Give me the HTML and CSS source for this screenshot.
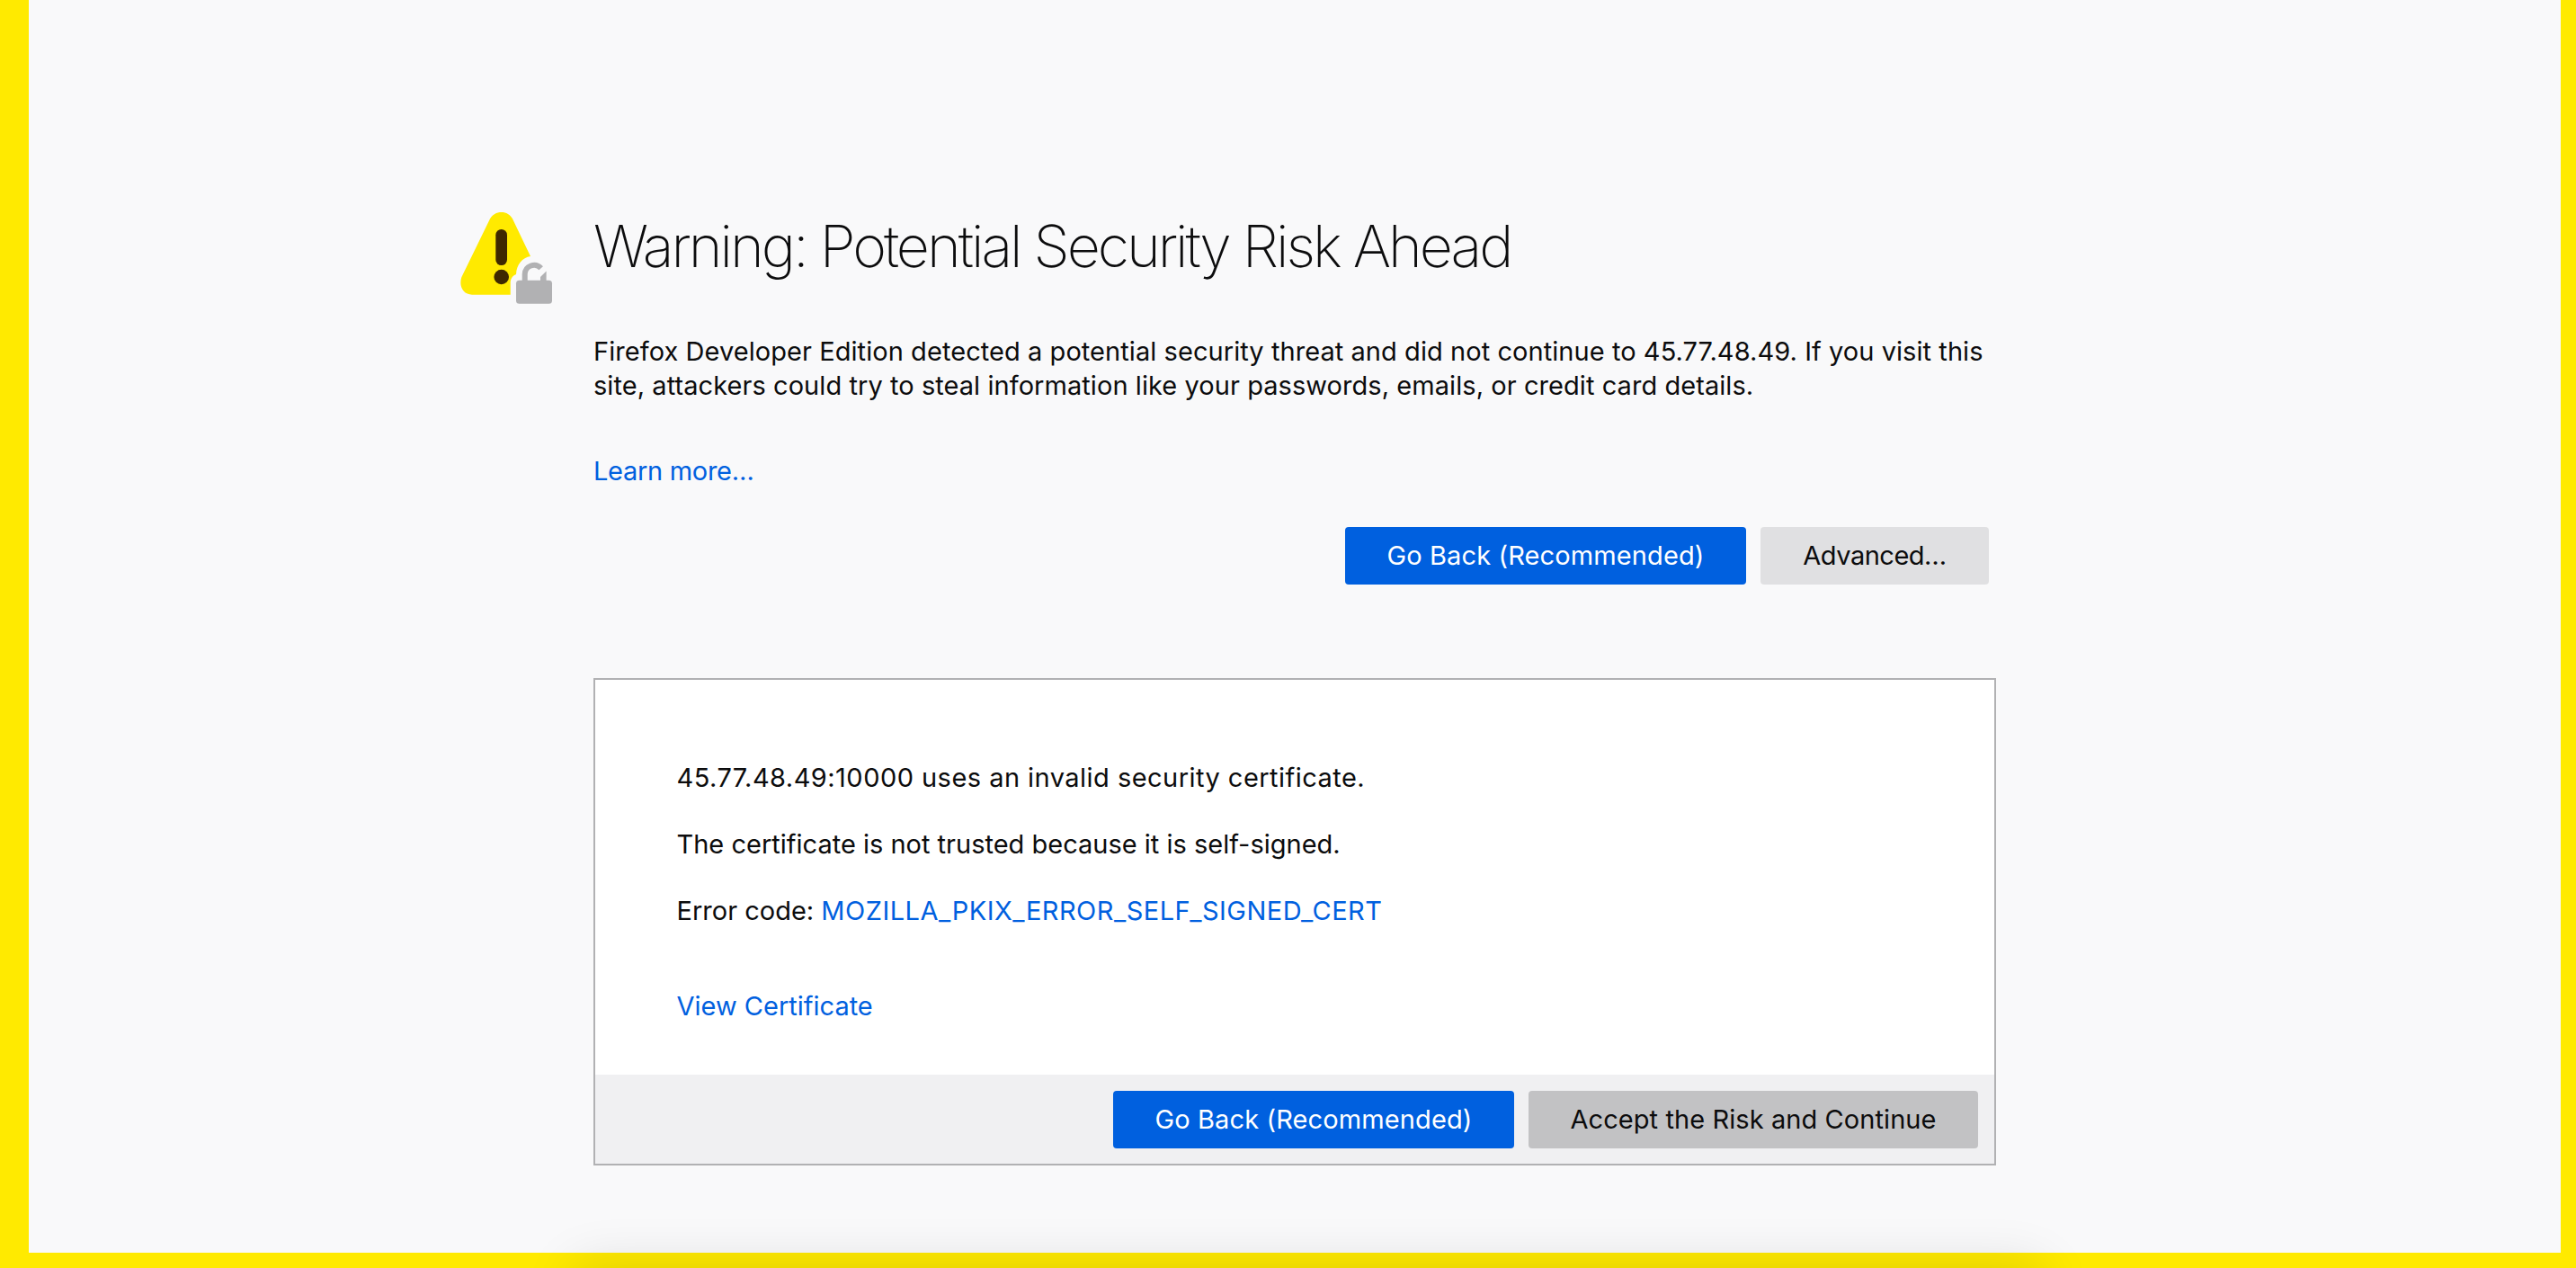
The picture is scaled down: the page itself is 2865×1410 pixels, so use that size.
FILE: index.html
```html
<!DOCTYPE html>
<html lang="en">
<head>
<meta charset="utf-8">
<title>Warning: Potential Security Risk Ahead</title>
<link rel="stylesheet" href="styles.css">
</head>
<body>
<div class="frame">
  <div class="layout">
    <div class="icon-col">
      <svg class="warn-icon" width="115" height="115" viewBox="0 0 115 115" aria-hidden="true">
        <path class="tri" d="M40 13.3 C42.5 8.6 47.3 6 52.7 6 C58 6 62.6 8.6 65 13.3 L85 55 C76 56.5 69.5 64 69 75 C65 76.5 62.7 80 62.7 85 L62.7 97.7 L20 97.7 C10.5 97.7 5 89 8.3 78.3 Z"/>
        <rect class="bang" x="46.3" y="25" width="12.7" height="40" rx="6.35"/>
        <circle class="bang" cx="52.7" cy="78" r="8.3"/>
        <rect class="lock" x="69" y="81.7" width="40" height="26" rx="3.5"/>
        <path class="shackle" d="M78.7 83 V75 A10.3 10.3 0 0 1 96.7 68.3"/>
        <path class="lock" d="M96 83 V78 L102.6 71.5 V83 Z"/>
      </svg>
    </div>
    <main class="content">
      <h1 class="title">Warning: Potential Security Risk Ahead</h1>
      <p class="desc">Firefox Developer Edition detected a potential security threat and did not continue to 45.77.48.49. If you visit this site, attackers could try to steal information like your passwords, emails, or credit card details.</p>
      <p class="learn"><a href="#" class="link">Learn more…</a></p>
      <div class="actions">
        <button class="btn primary back-top">Go Back (Recommended)</button>
        <button class="btn secondary advanced">Advanced…</button>
      </div>
      <section class="panel">
        <div class="panel-body">
          <p class="panel-line line-host">45.77.48.49:10000 uses an invalid security certificate.</p>
          <p class="panel-line">The certificate is not trusted because it is self-signed.</p>
          <p class="panel-line">Error code: <a href="#" class="link code">MOZILLA_PKIX_ERROR_SELF_SIGNED_CERT</a></p>
          <p class="panel-view"><a href="#" class="link">View Certificate</a></p>
        </div>
        <div class="panel-footer">
          <button class="btn primary back-bottom">Go Back (Recommended)</button>
          <button class="btn tertiary accept">Accept the Risk and Continue</button>
        </div>
      </section>
    </main>
  </div>
</div>
<div class="bottom-shadow"></div>
</body>
</html>
```

FILE: styles.css
```css
html, body { margin: 0; height: 100%; overflow: hidden; }
body {
  position: relative;
  background: #f9f9fa;
  color: #0c0c0d;
  font-family: Inter, "Liberation Sans", sans-serif;
  font-size: 29px;
  line-height: 37.5px;
}
.frame {
  box-sizing: border-box;
  height: 1410px;
  border-style: solid;
  border-color: #ffea00;
  border-width: 0 17px 17px 32px;
  padding: 230px 0 0 473px;
}
.layout { display: flex; }
.icon-col { width: 155px; flex: none; }
.warn-icon { display: block; }
.tri { fill: #ffea00; }
.bang { fill: #3e2800; }
.lock { fill: #b1b1b3; }
.shackle { fill: none; stroke: #b1b1b3; stroke-width: 6; }
.content { width: 1560px; flex: none; }
.title {
  margin: 3px 0 0;
  font-size: 64.5px;
  line-height: 82px;
  font-weight: 200;
  letter-spacing: -3.05px;
}
.desc { margin: 57px 8px 0 0; letter-spacing: .06px; }
.learn { margin: 57.5px 0 0; letter-spacing: -.3px; }
.link { color: #0060df; text-decoration: none; }
.actions { display: flex; justify-content: flex-end; gap: 16px; margin: 44px 8px 0 0; }
.btn {
  height: 64px;
  padding: 0;
  border: 0;
  border-radius: 4px;
  font: inherit;
  color: #0c0c0d;
}
.primary { background: #0060df; color: #fff; }
.secondary { background: #e0e0e2; }
.tertiary { background: #c2c2c4; }
.back-top, .back-bottom { width: 446px; letter-spacing: .12px; }
.advanced { width: 254px; letter-spacing: -.5px; }
.accept { width: 500px; letter-spacing: .08px; }
.panel {
  margin-top: 104px;
  border: 2px solid #b1b1b3;
  background: #fff;
}
.panel-body { height: 439px; padding: 0 90.5px; overflow: hidden; }
.panel-line { margin: 0; }
.panel-line:first-child { margin-top: 90px; }
.panel-line + .panel-line { margin-top: 36.5px; }
.line-host { letter-spacing: .46px; }
.code { letter-spacing: .49px; }
.panel-view { margin: 68px 0 0; }
.panel-footer {
  display: flex;
  justify-content: flex-end;
  gap: 16px;
  height: 99px;
  padding: 18px 18px 0 0;
  box-sizing: border-box;
  background: #f0f0f2;
}
.bottom-shadow {
  position: absolute;
  left: 640px;
  top: 1410px;
  width: 1630px;
  height: 60px;
  box-shadow: 0 0 60px rgba(0, 0, 0, .14);
}
```
